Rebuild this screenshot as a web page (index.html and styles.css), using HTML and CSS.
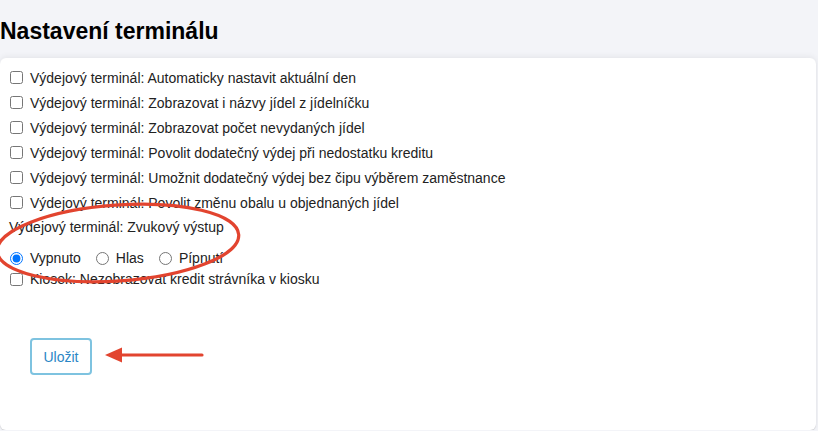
FILE: index.html
```html
<!DOCTYPE html>
<html lang="cs">
<head>
<meta charset="utf-8">
<title>Nastavení terminálu</title>
<link rel="stylesheet" href="styles.css">
</head>
<body>
<h1 class="title">Nastavení terminálu</h1>
<div class="card">
  <form class="settings">
    <label class="row"><input type="checkbox"><span>Výdejový terminál: Automaticky nastavit aktuální den</span></label>
    <label class="row"><input type="checkbox"><span>Výdejový terminál: Zobrazovat i názvy jídel z jídelníčku</span></label>
    <label class="row"><input type="checkbox"><span>Výdejový terminál: Zobrazovat počet nevydaných jídel</span></label>
    <label class="row"><input type="checkbox"><span>Výdejový terminál: Povolit dodatečný výdej při nedostatku kreditu</span></label>
    <label class="row"><input type="checkbox"><span>Výdejový terminál: Umožnit dodatečný výdej bez čipu výběrem zaměstnance</span></label>
    <label class="row"><input type="checkbox"><span>Výdejový terminál: Povolit změnu obalu u objednaných jídel</span></label>
    <div class="group-label">Výdejový terminál: Zvukový výstup</div>
    <div class="radios">
      <label class="radio"><input type="radio" name="sound" checked><span>Vypnuto</span></label>
      <label class="radio"><input type="radio" name="sound"><span>Hlas</span></label>
      <label class="radio"><input type="radio" name="sound"><span>Pípnutí</span></label>
    </div>
    <label class="row row-short"><input type="checkbox"><span>Kiosek: Nezobrazovat kredit strávníka v kiosku</span></label>
    <div class="actions">
      <button type="button" class="btn">Uložit</button>
    </div>
  </form>
  <svg class="annot" width="818" height="431" viewBox="0 0 818 431">
    <ellipse cx="118" cy="243" rx="121" ry="38" transform="rotate(-4 118 243)" fill="none" stroke="#e2442f" stroke-width="3.2"/>
    <line x1="118" y1="355" x2="202" y2="355" stroke="#e2442f" stroke-width="3.2" stroke-linecap="round"/>
    <polygon points="105,355 122,347.5 122,362.5" fill="#e2442f"/>
  </svg>
</div>
</body>
</html>
```
FILE: styles.css
```css
html, body {
  margin: 0;
  padding: 0;
  background: #f3f4f8;
  font-family: "Liberation Sans", Arial, sans-serif;
  color: #222;
}
.title {
  margin: 0;
  padding: 17px 0 0 0;
  height: 41px;
  box-sizing: border-box;
  font-size: 23px;
  line-height: 28px;
  font-weight: bold;
  color: #000;
}
.card {
  position: relative;
  background: #fff;
  margin-right: 2px;
  margin-top: 17px;
  height: 372px;
  box-sizing: border-box;
  border-radius: 6px;
  box-shadow: 0 -1px 6px rgba(0,0,0,0.07), 0 1px 1px rgba(0,0,0,0.12);
}
.settings {
  display: flex;
  flex-direction: column;
  padding: 7px 0 0 9px;
  font-size: 14px;
}
.row {
  display: flex;
  align-items: center;
  height: 25px;
  gap: 7px;
}
.row-short {
  height: 22px;
}
.row input, .radio input {
  margin: 0 0 0 1px;
  width: 13px;
  height: 13px;
  flex: none;
}
.group-label {
  height: 25px;
  line-height: 25px;
}
.radios {
  display: flex;
  align-items: center;
  height: 20px;
  margin-top: 8px;
  gap: 14px;
}
.radio {
  display: flex;
  align-items: center;
  gap: 7px;
}
.actions {
  padding: 48px 0 0 21px;
}
.btn {
  width: 62px;
  height: 37px;
  background: #fff;
  border: 2px solid #7ec3e0;
  border-radius: 4px;
  color: #2a86c6;
  font-family: "Liberation Sans", Arial, sans-serif;
  font-size: 14px;
  padding: 0;
}
.annot {
  position: absolute;
  left: 0;
  top: -58px;
  pointer-events: none;
}
```
